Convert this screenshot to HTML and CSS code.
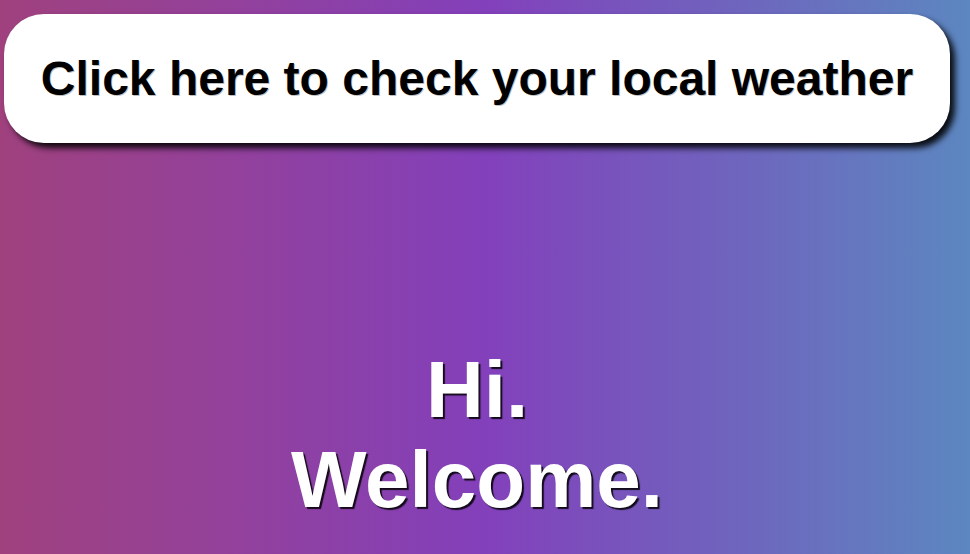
FILE: index.html
```html
<!DOCTYPE html>
<html>
<head>
<meta charset="utf-8">
<link rel="stylesheet" href="styles.css">
</head>
<body>
<div class="page">
  <button class="weather-btn">Click here to check your local weather</button>
  <div class="greeting">
    <div class="line">Hi.</div>
    <div class="line">Welcome.</div>
  </div>
</div>
</body>
</html>
```
FILE: styles.css
```css
html, body {
  margin: 0;
  height: 100%;
}
body {
  background: linear-gradient(to right, #a0417e 0%, #8340bb 50%, #5c87c0 100%);
  font-family: "Liberation Sans", Arial, sans-serif;
  overflow: hidden;
}
.page {
  width: 946px;
  margin-left: 4px;
  padding-top: 14px;
  display: flex;
  flex-direction: column;
  align-items: center;
}
.weather-btn {
  width: 946px;
  height: 129px;
  border: none;
  border-radius: 40px;
  background: #fff;
  box-shadow: 5px 5px 6px rgba(0, 0, 0, 0.9);
  font-family: "Liberation Sans", Arial, sans-serif;
  font-weight: bold;
  font-size: 48px;
  color: #000;
  text-shadow: 1px 1px 0 rgba(0, 0, 0, 0.25);
  padding: 0;
}
.greeting {
  margin-top: 202px;
  text-align: center;
  color: #fff;
  font-weight: bold;
  font-size: 80px;
  line-height: 90px;
  text-shadow: 2px 2px 1px rgba(0, 0, 0, 0.85);
}
```
